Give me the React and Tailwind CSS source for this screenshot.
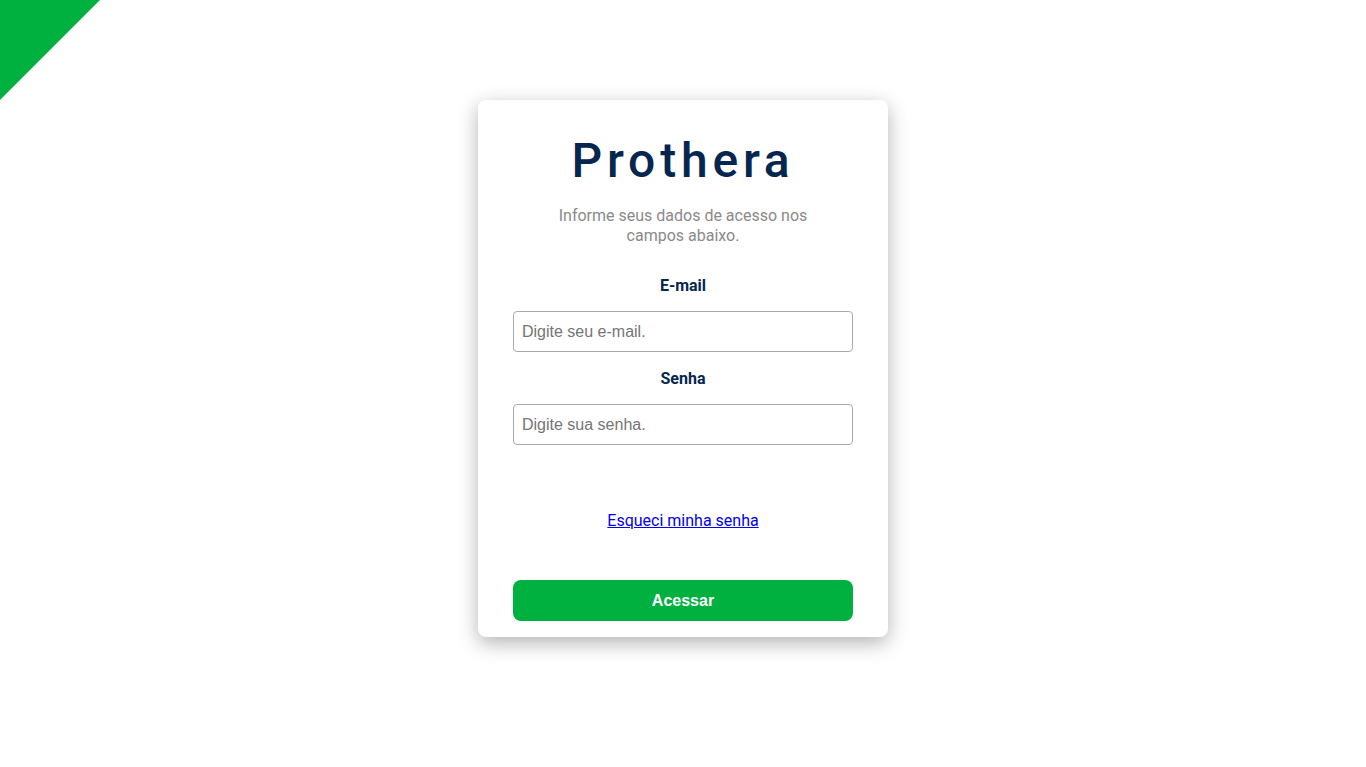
import { useState } from 'react';

export default function App() {
  const [email, setEmail] = useState('');
  const [senha, setSenha] = useState('');

  return (
    <div className="relative min-h-[767px] w-full bg-white font-['Roboto',sans-serif]">
      {/* corner decoration */}
      <div className="absolute left-0 top-0 h-[100px] w-[100px] bg-[#00b140] [clip-path:polygon(0_0,100%_0,0_100%)]" />

      <div className="flex justify-center pt-[100px]">
        <div className="flex w-[410px] flex-col items-center rounded-lg bg-white px-[35px] pt-[33px] pb-4 shadow-[0_6px_20px_rgba(0,0,0,0.3)]">
          <h1 className="text-[48px] font-medium leading-[56px] tracking-[0.1em] text-[#04264f]">
            Prothera
          </h1>
          <p className="mt-[17px] w-[260px] text-center text-base leading-5 text-[#8a8a8a]">
            Informe seus dados de acesso nos campos abaixo.
          </p>

          <label className="mt-[30px] text-base font-bold leading-5 text-[#04264f]">E-mail</label>
          <input
            type="email"
            value={email}
            onChange={e => setEmail(e.target.value)}
            placeholder="Digite seu e-mail."
            className="mt-[15px] h-[41px] w-full rounded border border-[#aaaaaa] px-2 font-['Liberation_Sans',Arial,sans-serif] text-base text-[#333] placeholder:text-[#757575] outline-none"
          />

          <label className="mt-[17px] text-base font-bold leading-5 text-[#04264f]">Senha</label>
          <input
            type="password"
            value={senha}
            onChange={e => setSenha(e.target.value)}
            placeholder="Digite sua senha."
            className="mt-[15px] h-[41px] w-full rounded border border-[#aaaaaa] px-2 font-['Liberation_Sans',Arial,sans-serif] text-base text-[#333] placeholder:text-[#757575] outline-none"
          />

          <a href="#" className="mt-[66px] text-base leading-5 text-[#0000ee] underline">
            Esqueci minha senha
          </a>

          <button className="mt-[49px] h-[41px] w-full rounded-lg bg-[#00b140] font-['Liberation_Sans',Arial,sans-serif] text-base font-bold text-white">
            Acessar
          </button>
        </div>
      </div>
    </div>
  );
}
